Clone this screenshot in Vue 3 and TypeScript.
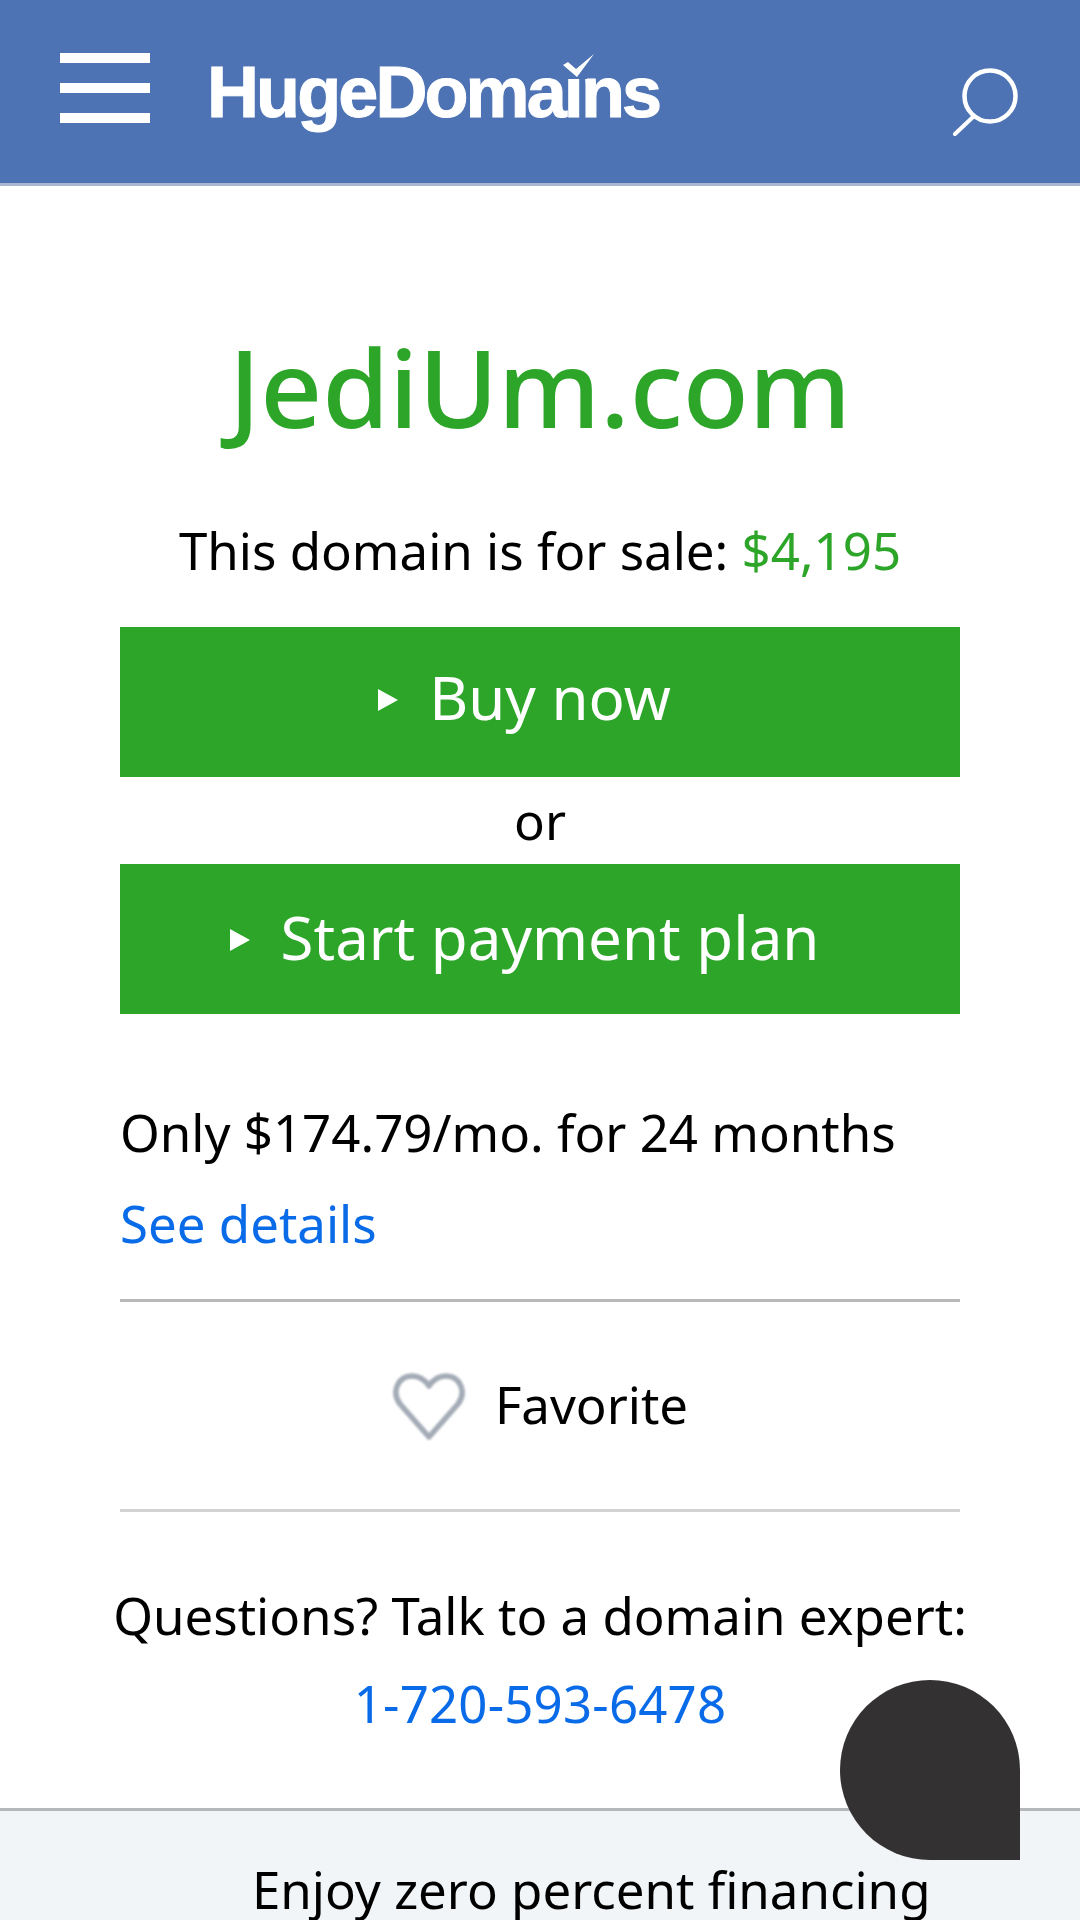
<script setup lang="ts">
const domain: string = 'JediUm.com'
</script>

<template>
  <div class="page">
    <header class="header">
      <div class="burger"><span></span><span></span><span></span></div>
      <div class="logo">
        HugeDomains
        <svg class="check" viewBox="0 0 32 26" width="32" height="26">
          <rect x="4" y="8" width="20" height="18" fill="#4e73b5" />
          <path d="M0 12 L5 9 L13 16 L31 1 L14 24 Z" fill="#fff" />
        </svg>
      </div>
      <svg class="search" viewBox="0 0 66 68" width="66" height="68">
        <circle cx="38" cy="28" r="25.5" fill="none" stroke="#fff" stroke-width="4.5" />
        <path d="M22 48 L3 66" fill="none" stroke="#fff" stroke-width="4" stroke-linecap="round" />
      </svg>
    </header>

    <main class="main">
      <h1 class="title">{{ domain }}</h1>
      <p class="sale">This domain is for sale: <span class="price">$4,195</span></p>
      <a class="btn"><i class="tri"></i>Buy now</a>
      <div class="or">or</div>
      <a class="btn second"><i class="tri"></i>Start payment plan</a>
      <p class="plan">Only $174.79/mo. for 24 months</p>
      <a class="link details">See details</a>
      <div class="favorite">
        <svg class="heart" viewBox="0 0 74 72" width="74" height="72">
          <path d="M37 66 L8 33 C-1 21 6 5 20 5 C28 5 33 9 37 15 C41 9 46 5 54 5 C68 5 75 21 66 33 Z" fill="none" stroke="#a3abb6" stroke-width="5.5" stroke-linejoin="round" />
        </svg>
        <span>Favorite</span>
      </div>
      <p class="questions">Questions? Talk to a domain expert:</p>
      <a class="link phone">1-720-593-6478</a>
    </main>

    <section class="footer">Enjoy zero percent financing</section>
    <div class="chat"></div>
  </div>
</template>

<style>
html, body { margin: 0; overflow: hidden; background: #fff; }
</style>

<style scoped>
.page {
  position: relative;
  width: 1080px;
  height: 1920px;
  overflow: hidden;
  font-family: "Noto Sans", sans-serif;
  font-size: 51px;
  color: #000;
  background: #fff;
}
.header {
  height: 186px;
  box-sizing: border-box;
  border-bottom: 3px solid #aab6cf;
  background: #4e73b5;
  display: flex;
  align-items: flex-start;
  padding: 53px 62px 0 60px;
}
.burger { width: 90px; height: 70px; display: flex; flex-direction: column; justify-content: space-between; }
.burger span { display: block; height: 10px; background: #fff; }
.logo {
  position: relative;
  margin-left: 57px;
  font-family: "Liberation Sans", sans-serif;
  font-weight: 700;
  font-size: 72px;
  line-height: 79px;
  letter-spacing: -2.9px;
  color: #fff;
  -webkit-text-stroke: 1px #fff;
}
.check { position: absolute; left: 356px; top: 0; }
.search { margin-left: auto; margin-top: 15px; }
.main { display: flex; flex-direction: column; padding: 0 120px; }
.title {
  margin: 126px 0 0;
  text-align: center;
  font-size: 108px;
  font-weight: 500;
  line-height: 150px;
  color: #2ca528;
}
.sale { margin: 53px -20px 0; text-align: center; line-height: 70px; }
.price { color: #2ca528; }
.btn {
  height: 150px;
  margin-top: 42px;
  padding: 0 31px 10px 0;
  box-sizing: border-box;
  background: #2ca528;
  color: #fff;
  font-size: 60px;
  display: flex;
  align-items: center;
  justify-content: center;
}
.btn.second { margin-top: 0; padding-bottom: 5px; }
.tri {
  width: 0; height: 0;
  margin: 0 31px 0 0;
  border-left: 20px solid #fff;
  border-top: 11.5px solid transparent;
  border-bottom: 11.5px solid transparent;
  position: relative;
  top: 3px;
}
.or { height: 87px; line-height: 86px; text-align: center; }
.plan { margin: 72.5px 0 0; line-height: 91px; }
.link { color: #0a6be8; }
.details { line-height: 90px; padding-bottom: 31.5px; border-bottom: 3px solid #b8b8b8; }
.favorite {
  height: 207px;
  border-bottom: 3px solid #d2d2d2;
  display: flex;
  align-items: center;
  justify-content: center;
  gap: 29px;
}
.heart { filter: blur(1px); position: relative; top: 1px; }
.favorite span { position: relative; top: -2px; }
.questions { margin: 59px -20px 0; text-align: center; line-height: 88px; white-space: nowrap; }
.phone { text-align: center; line-height: 88px; letter-spacing: 0.17px; }
.footer {
  margin-top: 61px;
  height: 200px;
  box-sizing: border-box;
  border-top: 3px solid #b5b7b9;
  background: #f1f5f8;
  padding: 43px 0 0 252px;
  line-height: 70px;
}
.chat {
  position: absolute;
  left: 840px;
  top: 1680px;
  width: 180px;
  height: 180px;
  background: #333132;
  border-radius: 50% 50% 0 50%;
}
</style>
